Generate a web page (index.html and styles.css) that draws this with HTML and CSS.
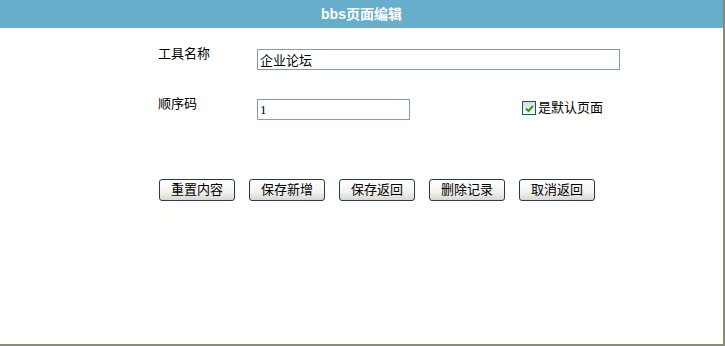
FILE: index.html
```html
<!DOCTYPE html>
<html lang="zh-cn">

<head>
    <meta charset="UTF-8">
    <title>bbs页面编辑</title>
    <link rel="stylesheet" href="styles.css">
</head>

<body>
    <div class="page">
        <div class="title">bbs页面编辑</div>
        <form class="edit-form">
            <div class="row">
                <label class="label" for="name">工具名称</label>
                <input class="txt txt-long" type="text" id="name" value="企业论坛">
            </div>
            <div class="row">
                <label class="label" for="order">顺序码</label>
                <input class="txt txt-short" type="text" id="order" value="1">
                <label class="check">
                    <span class="box">
                        <svg width="9" height="9" viewBox="0 0 9 9">
                            <path d="M1 4.5 L3.5 7 L8 1.8" fill="none" stroke="#21a121" stroke-width="2"/>
                        </svg>
                    </span>是默认页面
                </label>
            </div>
            <div class="buttons">
                <button type="button" class="btn">重置内容</button>
                <button type="button" class="btn">保存新增</button>
                <button type="button" class="btn">保存返回</button>
                <button type="button" class="btn">删除记录</button>
                <button type="button" class="btn">取消返回</button>
            </div>
        </form>
    </div>
</body>

</html>
```

FILE: styles.css
```css
body {
    margin: 0;
    background-color: #ffffff;
    font-family: "Liberation Sans", "Noto Sans CJK SC", sans-serif;
    font-size: 13px;
    color: #000;
}

.page {
    width: 723px;
    height: 344px;
    border-right: 2px solid #8a8a78;
    border-bottom: 2px solid #8a8a78;
    background-color: #fffffe;
}

.title {
    height: 28px;
    line-height: 28px;
    background-color: #67aecd;
    color: #fff;
    font-weight: bold;
    font-size: 14px;
    text-align: center;
}

.edit-form {
    padding: 21px 0 0 158px;
}

.row {
    display: flex;
    align-items: flex-start;
    margin-bottom: 29px;
}

.label {
    width: 99px;
    line-height: 12px;
    margin-top: -1px;
}

.txt {
    box-sizing: border-box;
    height: 21px;
    border: 1px solid #7f9db9;
    padding: 0 2px;
    margin: 0;
    font-family: "Liberation Serif", "Noto Sans CJK SC", serif;
    font-size: 13px;
    color: #000;
    background: #fff;
    outline: none;
}

.txt-long {
    width: 363px;
}

.txt-short {
    width: 153px;
}

.check {
    display: flex;
    align-items: center;
    margin-left: 112px;
    margin-top: 2px;
    line-height: 14px;
}

.box {
    box-sizing: border-box;
    width: 14px;
    height: 14px;
    border: 1px solid #1c5180;
    background: linear-gradient(#dcdcd6, #fbfbf9);
    display: flex;
    align-items: center;
    justify-content: center;
    margin-right: 2px;
}

.buttons {
    display: flex;
    gap: 14px;
    margin-top: 59px;
    padding-left: 1px;
}

.btn {
    box-sizing: border-box;
    width: 76px;
    height: 22px;
    padding: 0;
    border: 1px solid #1f3d5c;
    border-radius: 3px;
    background: linear-gradient(#ffffff, #f2f2ee 60%, #d8d8d0);
    font-family: "Liberation Sans", "Noto Sans CJK SC", sans-serif;
    font-size: 13px;
    line-height: 20px;
    color: #000;
}
```
